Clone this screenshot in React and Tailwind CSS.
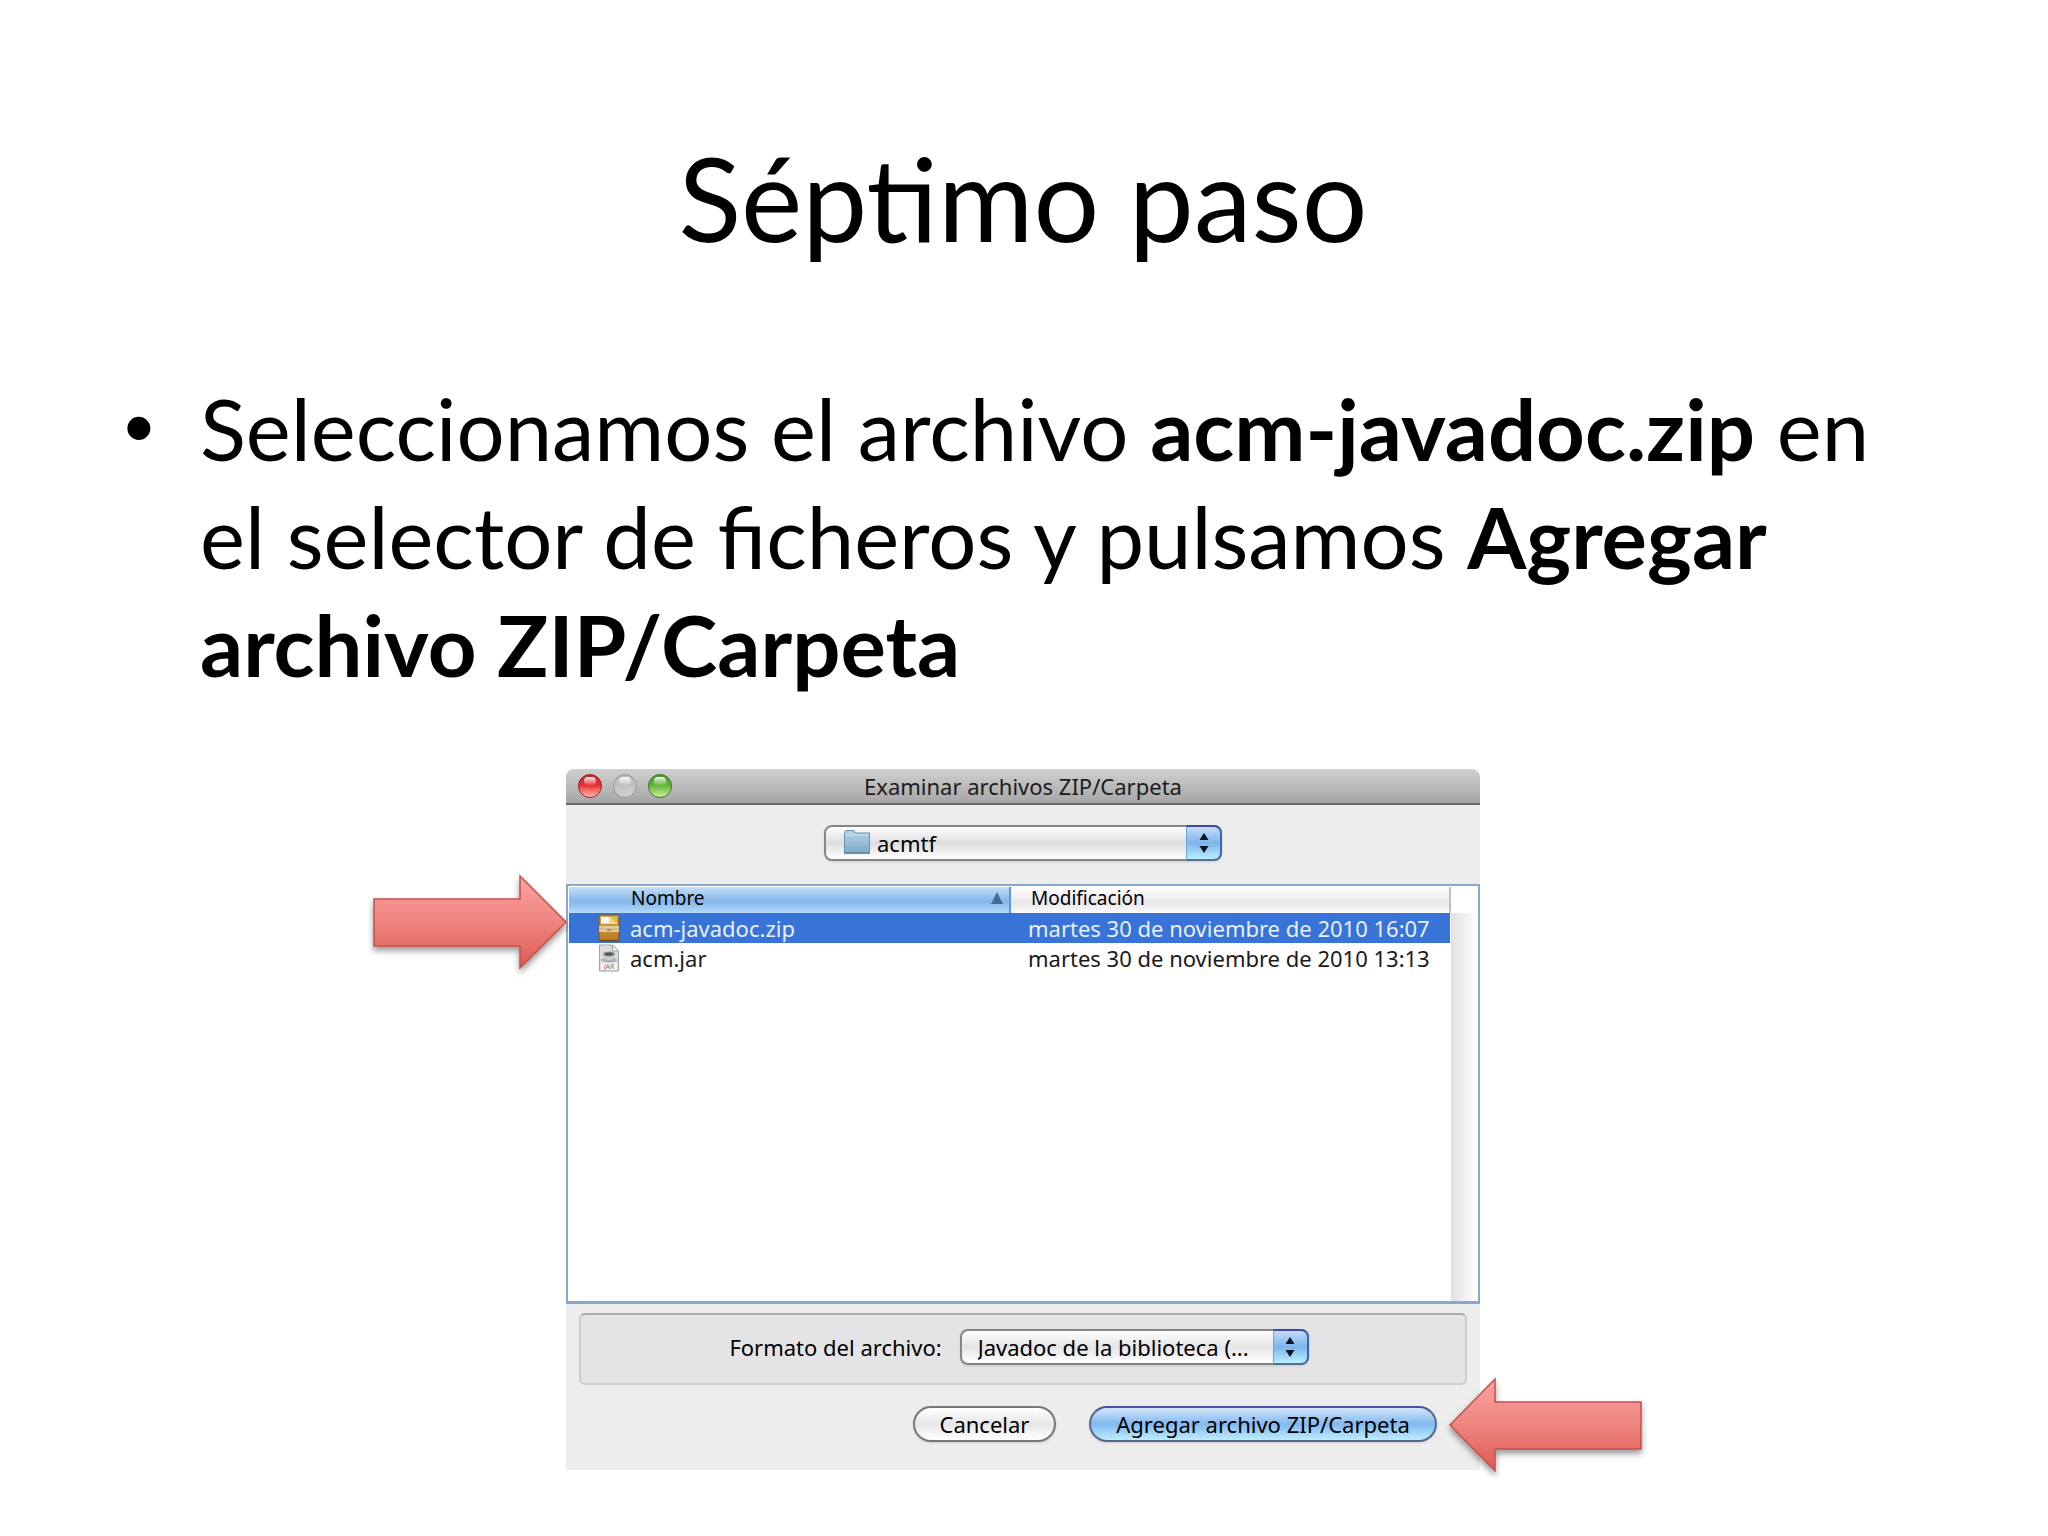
import React, { useState } from 'react';

const files = [
  { name: 'acm-javadoc.zip', modified: 'martes 30 de noviembre de 2010 16:07', type: 'zip' },
  { name: 'acm.jar', modified: 'martes 30 de noviembre de 2010 13:13', type: 'jar' },
];

const FolderIcon = () => (
  <svg width="28" height="26" viewBox="0 0 28 26" aria-hidden="true">
    <defs>
      <linearGradient id="folder" x1="0" y1="0" x2="0" y2="1">
        <stop offset="0" stopColor="#b5d3e9" />
        <stop offset="1" stopColor="#7faaca" />
      </linearGradient>
    </defs>
    <path d="M1.5 24V3.5L3 1.5h8l1.500 2.500h14V24z" fill="url(#folder)" stroke="#6690b0" />
    <path d="M2 6h24" stroke="#d3e6f3" />
    <path d="M1 24h26" stroke="#5c86a6" strokeWidth="1.500" />
  </svg>
);

const ZipIcon = () => (
  <svg width="22" height="28" viewBox="0 0 22 28" aria-hidden="true">
    <defs>
      <linearGradient id="zipBody" x1="0" y1="0" x2="0" y2="1">
        <stop offset="0" stopColor="#d9a94e" />
        <stop offset="1" stopColor="#b57a24" />
      </linearGradient>
    </defs>
    <rect x="1" y="1" width="20" height="26" rx="1" fill="url(#zipBody)" stroke="#7a4f18" />
    <rect x="3" y="3" width="16" height="7" fill="#f3dc86" />
    <path d="M13 3h6v5h-3z" fill="#d8c04a" />
    <path d="M3 3h8v6H3z" fill="#fffdf0" />
    <rect x="1" y="12" width="20" height="6" fill="#e3cc9c" />
    <path d="M1 15h20" stroke="#c0a672" />
    <rect x="9" y="15" width="4" height="2" fill="#a68f62" />
    <path d="M2 26.500h18" stroke="#6b4212" />
  </svg>
);

const JarIcon = () => (
  <svg width="22" height="28" viewBox="0 0 22 28" aria-hidden="true">
    <path d="M1.500 1h13l6 6v20h-19z" fill="#dcdcde" stroke="#a5a5a8" />
    <path d="M14.500 1v6h6z" fill="#fafafa" stroke="#a5a5a8" />
    <ellipse cx="11" cy="16" rx="8" ry="2.500" fill="#aeb1b3" />
    <path d="M5 10h12c0 4-2 6-6 6s-6-2-6-6z" fill="#c9cccd" />
    <ellipse cx="11" cy="10" rx="6" ry="2.500" fill="#8c9294" />
    <ellipse cx="11" cy="10" rx="4" ry="1.500" fill="#4d5a40" />
    <rect x="3" y="19" width="16" height="7" fill="#f6f6f7" />
    <text x="11" y="25" textAnchor="middle" fontSize="7" fontFamily="Noto Sans, sans-serif" fill="#77777b">JAR</text>
  </svg>
);

const Arrow = ({ flip, className }) => (
  <svg
    width="204"
    height="110"
    viewBox="0 0 204 110"
    className={className}
    aria-hidden="true"
  >
    <defs>
      <linearGradient id="arrowFill" x1="0" y1="0" x2="0" y2="1">
        <stop offset="0" stopColor="#fda3a0" />
        <stop offset="0.5" stopColor="#ee8480" />
        <stop offset="1" stopColor="#e05a50" />
      </linearGradient>
      <filter id="arrowShadow" x="-10%" y="-10%" width="120%" height="130%">
        <feDropShadow dx="0" dy="4" stdDeviation="3" floodColor="#000" floodOpacity="0.4" />
      </filter>
    </defs>
    <path
      d={flip ? 'M6 51L51 5v23h146v47H51v22z' : 'M198 51L152 5v23H6v47h146v22z'}
      fill="url(#arrowFill)"
      stroke="#c4504b"
      strokeWidth="1.500"
      filter="url(#arrowShadow)"
    />
  </svg>
);

// Red / disabled / green window buttons
const WindowButton = ({ label, className, disabled }) => (
  <button
    type="button"
    aria-label={label}
    disabled={disabled}
    className={`flex size-6 justify-center rounded-full border pt-0.5 ${className}`}
  >
    <span className="h-2 w-3 rounded-full bg-linear-to-b from-white/90 to-white/10"></span>
  </button>
);

const Stepper = () => (
  <span className="pointer-events-none absolute inset-y-0 right-0 flex w-9 items-center justify-center rounded-r-lg border-2 border-l border-t-[#4048a8] border-r-[#3f62b4] border-b-[#55708f] border-l-[#6ba4dc] bg-linear-to-b from-[#c3dcf6] via-[#7db4ee] via-50% to-[#b9f0ff]">
    <svg width="10" height="22" viewBox="0 0 10 22" aria-hidden="true">
      <path d="M5 1l4.500 7h-9zM5 21l4.500-7h-9z" fill="#0c1420" />
    </svg>
  </span>
);

const App = () => {
  const [selected, setSelected] = useState('acm-javadoc.zip');

  return (
    <main className="min-h-screen bg-white pt-[132px] pr-[126px] pb-[64px] pl-[124px] text-black">
      <h1 className="text-center font-['Lato',sans-serif] text-[116px] leading-[132px]">Séptimo paso</h1>

      <ul className="mt-[110px] font-['Lato',sans-serif] text-[85px] leading-[108px]">
        <li className="flex">
          <span className="w-[76px] shrink-0 font-['Liberation_Sans',sans-serif]">•</span>
          <p>
            Seleccionamos el archivo <b>acm-javadoc.zip</b> en el selector de ficheros y pulsamos{' '}
            <b>Agregar archivo ZIP/Carpeta</b>
          </p>
        </li>
      </ul>

      <section
        aria-labelledby="dialog-title"
        className="relative mx-auto mt-[71px] w-full max-w-[914px] font-['Noto_Sans',sans-serif] text-[22px] leading-7"
      >
        <header className="grid h-9 grid-cols-[1fr_auto_1fr] items-center rounded-t-lg border-b-2 border-[#6c6c6c] bg-linear-to-b from-[#d0d0d0] to-[#a6a6a6] px-3">
          <div className="flex gap-[11px]">
            <WindowButton
              label="Cerrar"
              className="border-[#8e2a2c] bg-linear-to-b from-[#c8242a] via-[#e8343a] to-[#ffb0b0]"
            />
            <WindowButton
              label="Minimizar"
              disabled
              className="border-[#989898] bg-linear-to-b from-[#b4b4b4] to-[#d2d2d2]"
            />
            <WindowButton
              label="Ampliar"
              className="border-[#42702a] bg-linear-to-b from-[#4c9a2a] via-[#68b83c] to-[#c8f49a]"
            />
          </div>
          <h2 id="dialog-title" className="text-[#1c1c1c]">Examinar archivos ZIP/Carpeta</h2>
        </header>

        <div className="bg-[#ededee]">
          <div className="flex justify-center pt-5 pb-[23px]">
            <div className="relative h-9 w-[398px]">
              <select
                aria-label="Carpeta"
                className="size-full appearance-none rounded-lg border-2 border-[#858585] bg-linear-to-b from-white via-[#dedee0] via-50% to-white pl-[51px] shadow-sm"
              >
                <option>acmtf</option>
              </select>
              <span className="pointer-events-none absolute top-1 left-[19px]">
                <FolderIcon />
              </span>
              <Stepper />
            </div>
          </div>

          {/* Lista de archivos */}
          <div className="flex h-[420px] border-2 border-b-3 border-[#87a9cb] bg-white pt-px pl-px">
            <div className="flex-1">
              <table className="w-full table-fixed border-collapse text-left">
                <thead>
                  <tr className="h-[26px] text-[19px] leading-[22px]">
                    <th className="w-[441px] border-r-2 border-[#5f97d0] bg-linear-to-b from-[#c4dff7] via-[#84b6ea] via-55% to-[#b4dcfa] p-0 pb-1 font-normal">
                      <button type="button" className="flex w-full items-center justify-between pr-1.5 pl-[62px]">
                        Nombre
                        <svg width="12" height="12" viewBox="0 0 12 12" aria-hidden="true">
                          <path d="M6 0l6 12H0z" fill="#456b94" />
                        </svg>
                      </button>
                    </th>
                    <th className="border-r-2 border-[#c0c0c2] bg-linear-to-b from-white via-[#e9e7ea] via-60% to-[#fbfafb] p-0 pb-1 pl-[20px] font-normal">
                      Modificación
                    </th>
                  </tr>
                </thead>
                <tbody>
                  {files.map((file) => (
                    <tr
                      key={file.name}
                      onClick={() => setSelected(file.name)}
                      aria-selected={selected === file.name}
                      className={selected === file.name ? 'bg-[#3873d8] text-[#e8f0ff]' : 'text-[#1a1a1a]'}
                    >
                      <td className="p-0">
                        <div className="flex h-[30px] items-center gap-[10px] pl-[29px]">
                          {file.type === 'zip' ? <ZipIcon /> : <JarIcon />}
                          {file.name}
                        </div>
                      </td>
                      <td className="p-0 pl-[18px] whitespace-nowrap">{file.modified}</td>
                    </tr>
                  ))}
                </tbody>
              </table>
            </div>
            <div className="mt-[26px] w-[27px] bg-linear-to-r from-[#e2e0e3] to-white"></div>
          </div>

          <div className="px-[13px] pt-[9px] pb-[28px]">
            <div className="mb-[21px] flex h-[72px] items-center justify-center gap-[18px] rounded-md border-2 border-[#cdcdcf] border-t-[#ababad] bg-[#e4e4e6] pr-2 pb-1">
              <label htmlFor="format">Formato del archivo:</label>
              <div className="relative h-9 w-[349px]">
                <select
                  id="format"
                  className="size-full appearance-none rounded-lg border-2 border-[#858585] bg-linear-to-b from-white via-[#e4e4e6] via-50% to-white pl-4 shadow-sm"
                >
                  <option>Javadoc de la biblioteca (...</option>
                </select>
                <Stepper />
              </div>
            </div>
            <div className="flex justify-end gap-[33px] pr-[30px]">
              <button
                type="button"
                className="h-9 w-[143px] rounded-full border-2 border-[#77777a] bg-linear-to-b from-white via-[#e6e6e8] via-50% to-white shadow-sm"
              >
                Cancelar
              </button>
              <button
                type="button"
                className="h-9 w-[348px] rounded-full border-2 border-[#53698c] border-t-[#4a50a8] bg-linear-to-b from-[#d3e6fa] via-[#82b8f0] via-50% to-[#bdecff] shadow-sm"
              >
                Agregar archivo ZIP/Carpeta
              </button>
            </div>
          </div>
        </div>

        {/* Flechas que señalan el archivo y el botón */}
        <Arrow className="absolute top-[102px] -left-[198px]" />
        <Arrow flip className="absolute top-[605px] left-[878px]" />
      </section>
    </main>
  );
};

export default App;
